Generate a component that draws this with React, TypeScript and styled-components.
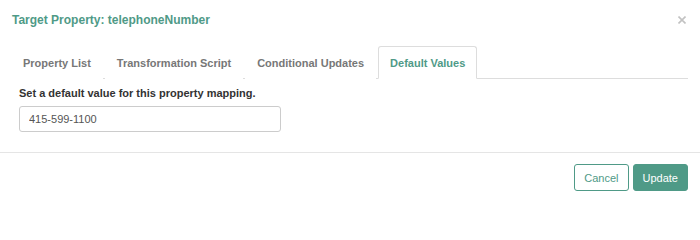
import React, { useState } from "react";
import styled, { createGlobalStyle } from "styled-components";

const Global = createGlobalStyle`
  html, body { margin: 0; padding: 0; background: #fff; }
  body { font-family: "Liberation Sans", Arial, Helvetica, sans-serif; }
  * { box-sizing: border-box; }
`;

const teal = "#4f9a87";

const Modal = styled.div`
  width: 700px;
  height: 202px;
  background: #fff;
  display: flex;
  flex-direction: column;
`;

const Header = styled.div`
  display: flex;
  justify-content: space-between;
  align-items: center;
  padding: 12px 12px 0 12px;
`;

const Title = styled.h4`
  margin: 0;
  font-size: 12px;
  line-height: 16px;
  font-weight: bold;
  color: ${teal};
`;

const Close = styled.button`
  border: 0;
  background: none;
  padding: 0;
  width: 10px;
  height: 10px;
  display: flex;
  align-items: center;
  justify-content: center;
  cursor: pointer;
  margin-right: 1px;
`;

const Body = styled.div`
  padding: 18px 12px 0 11px;
  flex: 1;
`;

const Tabs = styled.ul`
  list-style: none;
  margin: 0;
  padding: 0;
  display: flex;
  border-bottom: 1px solid #ddd;
`;

const Tab = styled.li<{ $active?: boolean }>`
  margin: 0 2px -1px 0;
  height: 33px;
  padding: 0 11px;
  display: flex;
  align-items: center;
  font-size: 11px;
  font-weight: bold;
  color: ${(p) => (p.$active ? teal : "#777")};
  background: #fff;
  border: 1px solid ${(p) => (p.$active ? "#ddd" : "transparent")};
  border-bottom-color: transparent;
  border-radius: 3px 3px 0 0;
  cursor: pointer;
`;

const Pane = styled.div`
  padding: 7px 8px 0;
`;

const Label = styled.label`
  display: block;
  font-size: 11px;
  line-height: 14px;
  font-weight: bold;
  color: #333;
  margin-bottom: 6px;
`;

const Input = styled.input`
  display: block;
  width: 262px;
  height: 26px;
  padding: 0 9px;
  font-family: inherit;
  font-size: 11px;
  color: #555;
  border: 1px solid #ccc;
  border-radius: 3px;
  outline: none;
`;

const Footer = styled.div`
  border-top: 1px solid #e5e5e5;
  padding: 11px 12px 11px;
  display: flex;
  justify-content: flex-end;
  gap: 4px;
`;

const Button = styled.button<{ $primary?: boolean }>`
  height: 27px;
  padding: 0 9px;
  font-family: inherit;
  font-size: 11px;
  border-radius: 3px;
  border: 1px solid ${teal};
  background: ${(p) => (p.$primary ? teal : "#fff")};
  color: ${(p) => (p.$primary ? "#fff" : teal)};
  cursor: pointer;
`;

const tabs = ["Property List", "Transformation Script", "Conditional Updates", "Default Values"];

export default function App() {
  const [active, setActive] = useState(3);
  const [value, setValue] = useState("415-599-1100");
  return (
    <>
      <Global />
      <Modal>
        <Header>
          <Title>Target Property: telephoneNumber</Title>
          <Close aria-label="Close">
            <svg width="8" height="8" viewBox="0 0 8 8">
              <path d="M0.5 0.5 L7.5 7.5 M7.5 0.5 L0.5 7.5" stroke="#c2c2c2" strokeWidth="1.6" />
            </svg>
          </Close>
        </Header>
        <Body>
          <Tabs>
            {tabs.map((t, i) => (
              <Tab key={t} $active={i === active} onClick={() => setActive(i)}>
                {t}
              </Tab>
            ))}
          </Tabs>
          <Pane>
            <Label>Set a default value for this property mapping.</Label>
            <Input value={value} onChange={(e) => setValue(e.target.value)} />
          </Pane>
        </Body>
        <Footer>
          <Button>Cancel</Button>
          <Button $primary>Update</Button>
        </Footer>
      </Modal>
    </>
  );
}
